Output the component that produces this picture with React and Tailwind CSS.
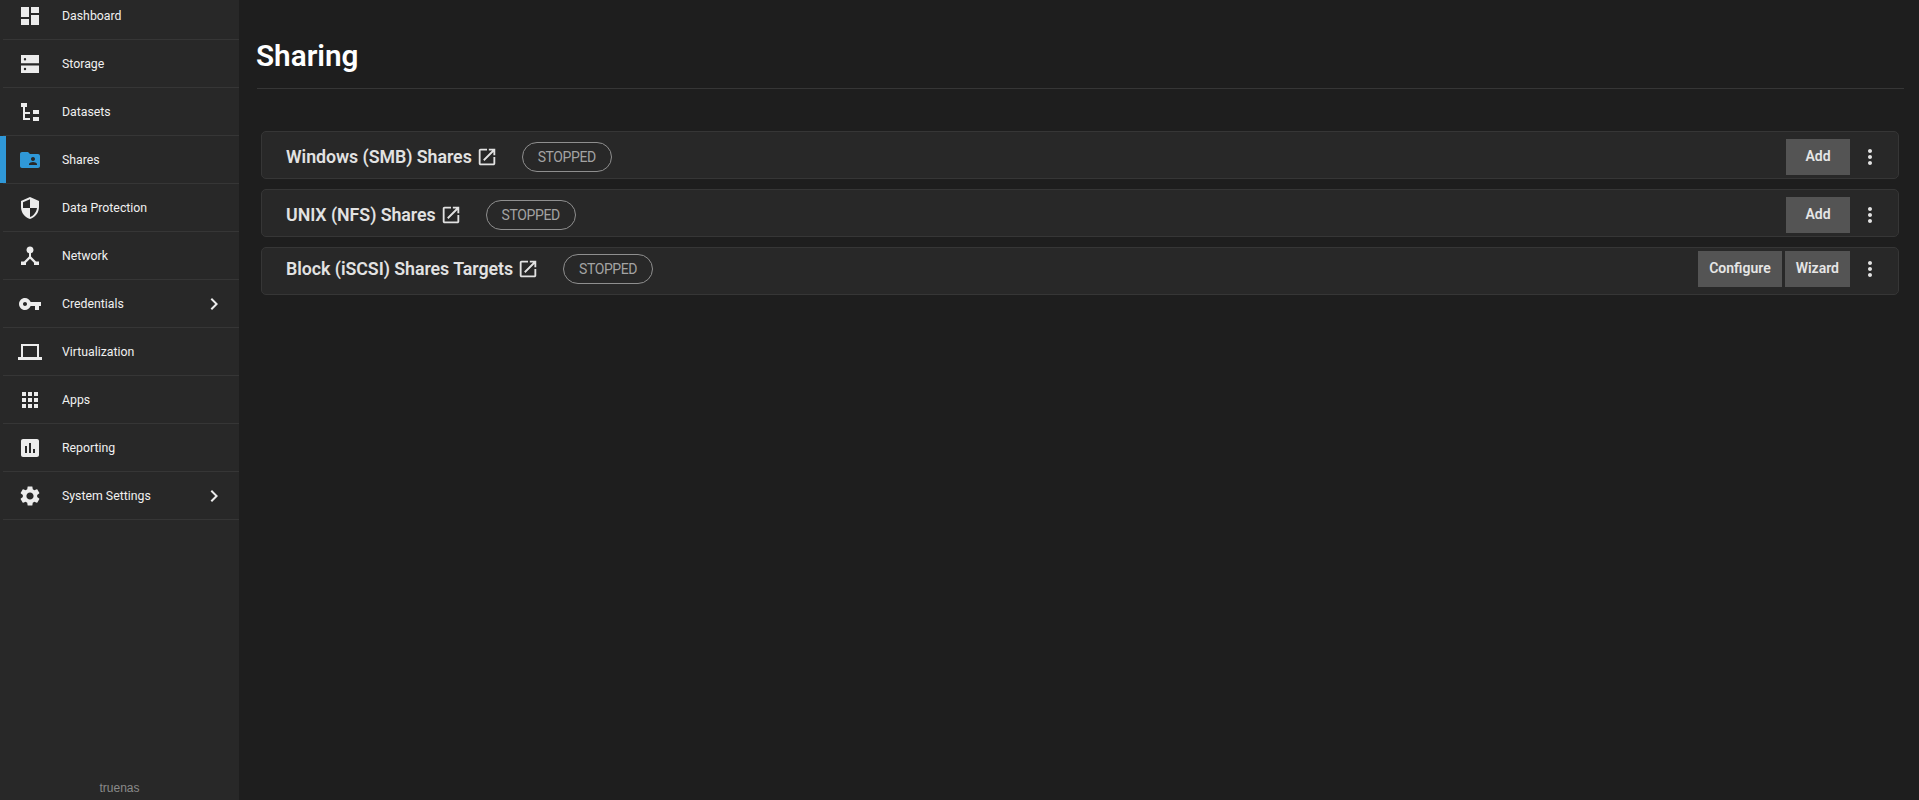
const ICONS = {
	dashboard: "M3 13h8V3H3v10zm0 8h8v-6H3v6zm10 0h8V11h-8v10zm0-18v6h8V3h-8z",
	storage: "M3 13.5h18V21H3v-7.5zm4 2.3a1.2 1.2 0 1 0 0 2.4 1.2 1.2 0 0 0 0-2.4zM3 3h18v8.3H3V3zm4 3a1.2 1.2 0 1 0 0 2.4 1.2 1.2 0 0 0 0-2.4z",
	datasets: "M3 3h6v4H7v5h5v2H7v4h5v2H5V7H3V3zM15 10h6v4h-6v-4zM15 17h6v4h-6v-4z",
	shares: "M20 6h-8l-2-2H4c-1.1 0-1.99.9-1.99 2L2 18c0 1.1.9 2 2 2h16c1.1 0 2-.9 2-2V8c0-1.1-.9-2-2-2zm-5 3c1.1 0 2 .9 2 2s-.9 2-2 2-2-.9-2-2 .9-2 2-2zm4 8h-8v-1c0-1.33 2.67-2 4-2s4 .67 4 2v1z",
	protection: "M12 1L3 5v6c0 5.55 3.84 10.74 9 12 5.16-1.26 9-6.45 9-12V5l-9-4zm0 10.99h7c-.53 4.12-3.28 7.79-7 8.94V12H5V6.3l7-3.11v8.8z",
	network: "M12 2.5a3.5 3.5 0 0 1 1 6.85V12.6l5 4.9h3V21h-5v-2.2l-4-4-4 4V21H3v-3.5h3l5-4.9V9.35A3.5 3.5 0 0 1 12 2.5z",
	credentials: "M12.65 10C11.83 7.67 9.61 6 7 6c-3.31 0-6 2.69-6 6s2.69 6 6 6c2.61 0 4.83-1.67 5.65-4H17v4h4v-4h2v-4H12.65zM7 14c-1.1 0-2-.9-2-2s.9-2 2-2 2 .9 2 2-.9 2-2 2z",
	virtualization: "M3 4h18v13h3v3H0v-3h3V4zm2 2v11h14V6H5z",
	apps: "M4 8h4V4H4v4zm6 12h4v-4h-4v4zm-6 0h4v-4H4v4zm0-6h4v-4H4v4zm6 0h4v-4h-4v4zm6-10v4h4V4h-4zm-6 4h4V4h-4v4zm6 6h4v-4h-4v4zm0 6h4v-4h-4v4z",
	reporting: "M19 3H5c-1.1 0-2 .9-2 2v14c0 1.1.9 2 2 2h14c1.1 0 2-.9 2-2V5c0-1.1-.9-2-2-2zM9 17H7v-7h2v7zm4 0h-2V7h2v10zm4 0h-2v-4h2v4z",
	settings: "M19.14 12.94c.04-.3.06-.61.06-.94 0-.32-.02-.64-.07-.94l2.03-1.58c.18-.14.23-.41.12-.61l-1.92-3.32c-.12-.22-.37-.29-.59-.22l-2.39.96c-.5-.38-1.03-.7-1.62-.94l-.36-2.54c-.04-.24-.24-.41-.48-.41h-3.84c-.24 0-.43.17-.47.41l-.36 2.54c-.59.24-1.13.57-1.62.94l-2.39-.96c-.22-.08-.47 0-.59.22L2.74 8.87c-.12.21-.08.47.12.61l2.03 1.58c-.05.3-.09.63-.09.94s.02.64.07.94l-2.03 1.58c-.18.14-.23.41-.12.61l1.92 3.32c.12.22.37.29.59.22l2.39-.96c.5.38 1.03.7 1.62.94l.36 2.54c.05.24.24.41.48.41h3.84c.24 0 .44-.17.47-.41l.36-2.54c.59-.24 1.13-.56 1.62-.94l2.39.96c.22.08.47 0 .59-.22l1.92-3.32c.12-.22.07-.47-.12-.61l-2.01-1.58zM12 15.6c-1.98 0-3.6-1.62-3.6-3.6s1.62-3.6 3.6-3.6 3.6 1.62 3.6 3.6-1.62 3.6-3.6 3.6z",
	open: "M19 19H5V5h7V3H5c-1.11 0-2 .9-2 2v14c0 1.1.89 2 2 2h14c1.1 0 2-.9 2-2v-7h-2v7zM14 3v2h3.59l-9.83 9.83 1.41 1.41L19 6.41V10h2V3h-7z",
	more: "M12 8c1.1 0 2-.9 2-2s-.9-2-2-2-2 .9-2 2 .9 2 2 2zm0 2c-1.1 0-2 .9-2 2s.9 2 2 2 2-.9 2-2-.9-2-2-2zm0 6c-1.1 0-2 .9-2 2s.9 2 2 2 2-.9 2-2-.9-2-2-2z",
	chevron: "M10 6L8.59 7.41 13.17 12l-4.58 4.59L10 18l6-6z",
};

const NAV = [
	{ label: "Dashboard", icon: "dashboard" },
	{ label: "Storage", icon: "storage" },
	{ label: "Datasets", icon: "datasets" },
	{ label: "Shares", icon: "shares", active: true },
	{ label: "Data Protection", icon: "protection" },
	{ label: "Network", icon: "network" },
	{ label: "Credentials", icon: "credentials", more: true },
	{ label: "Virtualization", icon: "virtualization" },
	{ label: "Apps", icon: "apps" },
	{ label: "Reporting", icon: "reporting" },
	{ label: "System Settings", icon: "settings", more: true },
];

const CARDS = [
	{ title: "Windows (SMB) Shares", actions: ["Add"], offset: "pt-[4px]" },
	{ title: "UNIX (NFS) Shares", actions: ["Add"], offset: "pt-[4px]" },
	{ title: "Block (iSCSI) Shares Targets", actions: ["Configure", "Wizard"], offset: "pb-[4px]" },
];

function Icon({ name, className }) {
	return (
		<svg viewBox="0 0 24 24" fill="currentColor" className={className}>
			<path fillRule="evenodd" d={ICONS[name]} />
		</svg>
	);
}

function NavItem({ item }) {
	return (
		<div className="relative ml-[3px] flex h-[48px] items-center border-b border-[#363636] pl-[15px]">
			{item.active && (
				<span className="absolute -left-[3px] top-0 h-[47px] w-[6px] bg-[#2f98d8]" />
			)}
			<Icon
				name={item.icon}
				className={`h-6 w-6 shrink-0 ${item.active ? "text-[#2f98d8]" : "text-[#ececec]"}`}
			/>
			<span className="ml-[20px] pt-[2px] text-[12.3px] text-[#f0f0f0]">{item.label}</span>
			{item.more && (
				<Icon name="chevron" className="ml-auto mr-[13px] h-6 w-6 text-[#ececec]" />
			)}
		</div>
	);
}

function ShareCard({ card }) {
	return (
		<div className={`flex h-[48px] items-center rounded-[5px] border border-[#363636] bg-[#282828] pl-[24px] pr-[6px] ${card.offset}`}>
			<h3 className="text-[17.8px] font-semibold tracking-[-0.05px] text-[#e2e2e2]">{card.title}</h3>
			<Icon name="open" className="ml-[4px] h-[22px] w-[22px] text-[#e2e2e2]" />
			<span className="ml-[24px] flex h-[30px] w-[90px] items-center justify-center rounded-full border border-[#8f8f8f] text-[14px] tracking-[-0.4px] text-[#a3a3a3]">
				STOPPED
			</span>
			<div className="ml-auto flex items-center gap-[3px]">
				{card.actions.map((action) => (
					<button
						key={action}
						className="flex h-[36px] min-w-[64px] items-center justify-center bg-[#545454] px-[11px] pb-[2px] text-[14px] font-semibold text-[#e6e6e6]"
					>
						{action}
					</button>
				))}
			</div>
			<Icon name="more" className="ml-[8px] h-6 w-[24px] text-[#e2e2e2]" />
			<span className="w-[10px]" />
		</div>
	);
}

export default function App() {
	return (
		<div className="flex h-[800px] overflow-hidden bg-[#1e1e1e] font-['Roboto',sans-serif]">
			<aside className="flex h-full w-[239px] shrink-0 flex-col bg-[#282828]">
				<nav className="-mt-[8px]">
					{NAV.map((item) => (
						<NavItem key={item.label} item={item} />
					))}
				</nav>
				<div className="mt-auto pb-[3px] text-center font-['Liberation_Sans',sans-serif] text-[12px] text-[#8a8a8a]">
					truenas
				</div>
			</aside>
			<main className="flex-1 pl-[17px] pr-[15px]">
				<h1 className="pt-[38px] text-[29.7px] leading-[36px] font-semibold text-white">Sharing</h1>
				<hr className="mt-[14px] ml-px border-[#363636]" />
				<div className="mt-[42px] ml-[5px] mr-[5px] flex flex-col gap-[10px]">
					{CARDS.map((card) => (
						<ShareCard key={card.title} card={card} />
					))}
				</div>
			</main>
		</div>
	);
}
